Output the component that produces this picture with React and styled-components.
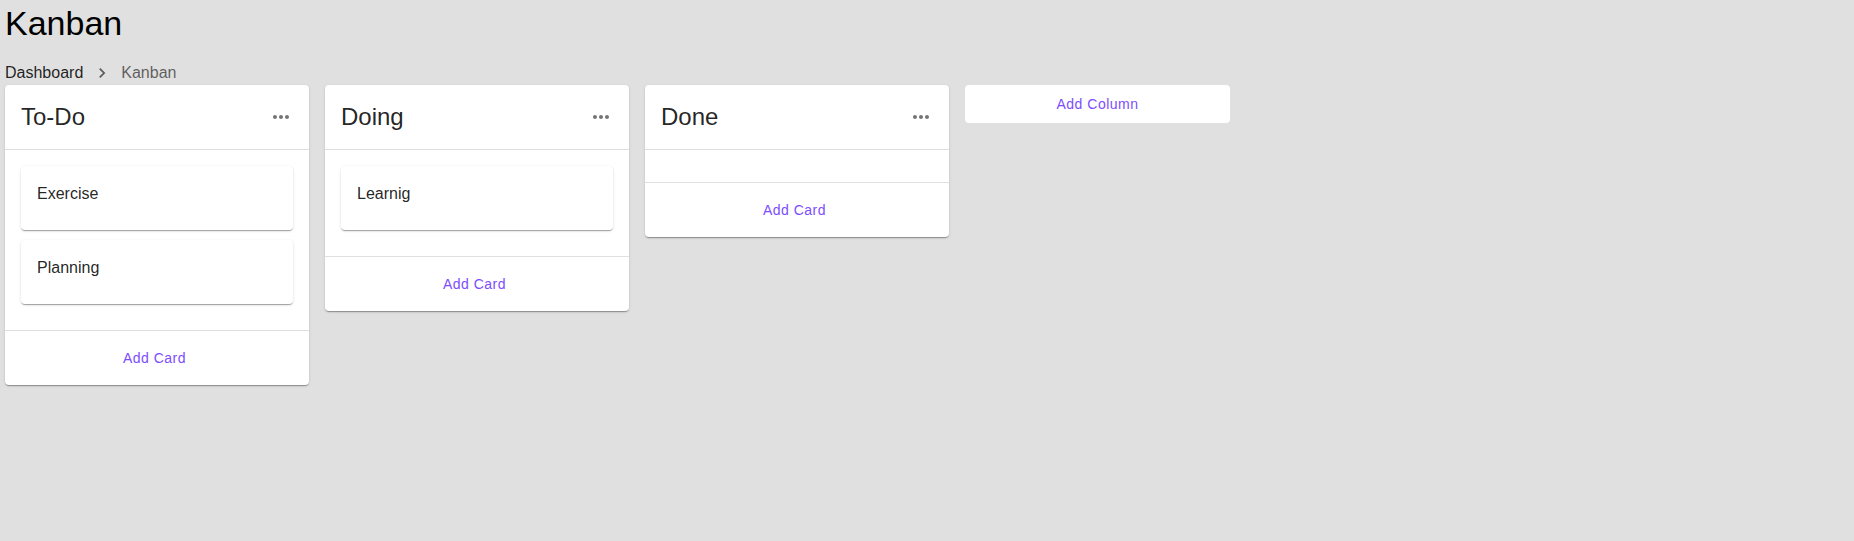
import React from "react";
import styled, { createGlobalStyle } from "styled-components";

const columns = [
  { id: "todo", title: "To-Do", cards: ["Exercise", "Planning"] },
  { id: "doing", title: "Doing", cards: ["Learnig"] },
  { id: "done", title: "Done", cards: [] },
];

const GlobalStyle = createGlobalStyle`
  html, body {
    margin: 0;
    padding: 0;
    background: #e0e0e0;
    font-family: "Liberation Sans", Arial, sans-serif;
    color: rgba(0, 0, 0, 0.87);
  }
`;

const Page = styled.div`
  min-height: 541px;
  padding: 2px 5px 0;
  box-sizing: border-box;
`;

const Title = styled.h1`
  margin: 0;
  font-size: 34px;
  font-weight: 400;
  line-height: 42px;
  color: #000;
`;

const Crumbs = styled.nav`
  display: flex;
  align-items: center;
  margin-top: 17px;
  font-size: 16px;
  line-height: 24px;
`;

const Crumb = styled.span`
  color: ${(p) => (p.$current ? "rgba(0, 0, 0, 0.6)" : "rgba(0, 0, 0, 0.87)")};
`;

const Separator = styled.span`
  display: flex;
  margin: 0 9px;
  color: rgba(0, 0, 0, 0.6);
`;

const Board = styled.div`
  display: flex;
  align-items: flex-start;
  gap: 16px;
  margin-top: 0;
`;

const Column = styled.section`
  width: 304px;
  background: #fff;
  border-radius: 4px;
  box-shadow: 0px 2px 1px -1px rgba(0, 0, 0, 0.2),
    0px 1px 1px 0px rgba(0, 0, 0, 0.14), 0px 1px 3px 0px rgba(0, 0, 0, 0.12);
  overflow: hidden;
`;

const Header = styled.header`
  height: 64px;
  display: flex;
  align-items: center;
  justify-content: space-between;
  padding: 0 16px;
  border-bottom: 1px solid rgba(0, 0, 0, 0.12);
  box-sizing: content-box;
`;

const ColumnTitle = styled.h2`
  margin: 0;
  font-size: 24px;
  font-weight: 400;
  line-height: 32px;
  color: rgba(0, 0, 0, 0.87);
`;

const MenuButton = styled.button`
  display: flex;
  padding: 0;
  border: none;
  background: none;
  color: rgba(0, 0, 0, 0.54);
  cursor: pointer;
`;

const CardList = styled.div`
  padding: 16px;
  border-bottom: 1px solid rgba(0, 0, 0, 0.12);
`;

const Card = styled.div`
  height: 64px;
  margin-bottom: 10px;
  padding: 16px;
  box-sizing: border-box;
  background: #fff;
  border-radius: 4px;
  box-shadow: 0px 2px 1px -1px rgba(0, 0, 0, 0.2),
    0px 1px 1px 0px rgba(0, 0, 0, 0.14), 0px 1px 3px 0px rgba(0, 0, 0, 0.12);
  font-size: 16px;
  line-height: 24px;
`;

const Footer = styled.footer`
  height: 54px;
  display: flex;
  align-items: center;
  justify-content: center;
  padding-right: 5px;
`;

const TextButton = styled.button`
  border: none;
  background: none;
  font-family: inherit;
  font-size: 14px;
  letter-spacing: 0.5px;
  color: #7c4dff;
  cursor: pointer;
  padding: 6px 8px;
`;

const AddColumn = styled.button`
  width: 265px;
  height: 38px;
  border: none;
  border-radius: 4px;
  background: #fff;
  font-family: inherit;
  font-size: 14px;
  letter-spacing: 0.5px;
  color: #7c4dff;
  cursor: pointer;
`;

const MoreIcon = () => (
  <svg width="24" height="24" viewBox="0 0 24 24" fill="currentColor">
    <path d="M6 10c-1.1 0-2 .9-2 2s.9 2 2 2 2-.9 2-2-.9-2-2-2zm12 0c-1.1 0-2 .9-2 2s.9 2 2 2 2-.9 2-2-.9-2-2-2zm-6 0c-1.1 0-2 .9-2 2s.9 2 2 2 2-.9 2-2-.9-2-2-2z" />
  </svg>
);

const ChevronIcon = () => (
  <svg width="20" height="20" viewBox="0 0 24 24" fill="currentColor">
    <path d="M10 6 8.59 7.41 13.17 12l-4.58 4.59L10 18l6-6z" />
  </svg>
);

export default function App() {
  return (
    <Page>
      <GlobalStyle />
      <Title>Kanban</Title>
      <Crumbs>
        <Crumb>Dashboard</Crumb>
        <Separator>
          <ChevronIcon />
        </Separator>
        <Crumb $current>Kanban</Crumb>
      </Crumbs>
      <Board>
        {columns.map((col) => (
          <Column key={col.id}>
            <Header>
              <ColumnTitle>{col.title}</ColumnTitle>
              <MenuButton aria-label="more">
                <MoreIcon />
              </MenuButton>
            </Header>
            <CardList>
              {col.cards.map((c) => (
                <Card key={c}>{c}</Card>
              ))}
            </CardList>
            <Footer>
              <TextButton>Add Card</TextButton>
            </Footer>
          </Column>
        ))}
        <AddColumn>Add Column</AddColumn>
      </Board>
    </Page>
  );
}
